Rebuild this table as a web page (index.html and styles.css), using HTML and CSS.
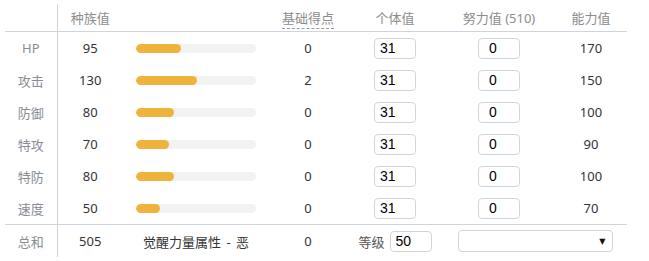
FILE: index.html
```html
<!DOCTYPE html>
<html lang="zh">
<head>
<meta charset="utf-8">
<link rel="stylesheet" href="styles.css">
</head>
<body>
<table class="stats">
  <colgroup>
    <col class="c-label"><col class="c-base"><col class="c-bar"><col class="c-ev"><col class="c-iv"><col class="c-effort"><col class="c-final">
  </colgroup>
  <thead>
    <tr>
      <th class="lbl"></th>
      <th class="th-base">种族值</th>
      <th></th>
      <th><span class="dashed">基础得点</span></th>
      <th>个体值</th>
      <th>努力值 (510)</th>
      <th>能力值</th>
    </tr>
  </thead>
  <tbody>
    <tr><td class="lbl">HP</td><td>95</td><td><div class="track"><div class="fill" style="width:44.7px"></div></div></td><td>0</td><td><input class="num" value="31"></td><td><input class="num ev" value="0"></td><td>170</td></tr>
    <tr><td class="lbl">攻击</td><td>130</td><td><div class="track"><div class="fill" style="width:61.2px"></div></div></td><td>2</td><td><input class="num" value="31"></td><td><input class="num ev" value="0"></td><td>150</td></tr>
    <tr><td class="lbl">防御</td><td>80</td><td><div class="track"><div class="fill" style="width:37.6px"></div></div></td><td>0</td><td><input class="num" value="31"></td><td><input class="num ev" value="0"></td><td>100</td></tr>
    <tr><td class="lbl">特攻</td><td>70</td><td><div class="track"><div class="fill" style="width:32.9px"></div></div></td><td>0</td><td><input class="num" value="31"></td><td><input class="num ev" value="0"></td><td>90</td></tr>
    <tr><td class="lbl">特防</td><td>80</td><td><div class="track"><div class="fill" style="width:37.6px"></div></div></td><td>0</td><td><input class="num" value="31"></td><td><input class="num ev" value="0"></td><td>100</td></tr>
    <tr><td class="lbl">速度</td><td>50</td><td><div class="track"><div class="fill" style="width:23.5px"></div></div></td><td>0</td><td><input class="num" value="31"></td><td><input class="num ev" value="0"></td><td>70</td></tr>
  </tbody>
  <tfoot>
    <tr>
      <td class="lbl">总和</td>
      <td>505</td>
      <td class="hp-type">觉醒力量属性 - 恶</td>
      <td>0</td>
      <td><span class="lv">等级</span><input class="num lvl" value="50"></td>
      <td colspan="2"><div class="select"><span class="arrow">▼</span></div></td>
    </tr>
  </tfoot>
</table>
</body>
</html>
```
FILE: styles.css
```css
html, body { margin: 0; padding: 0; background: #fff; }
body { padding: 4px 0 0 5px; font-family: "Noto Sans", "Noto Sans CJK SC", sans-serif; font-size: 13px; color: #333; }
.stats { border-collapse: collapse; table-layout: fixed; width: 622px; }
.c-label { width: 52px; }
.c-base { width: 66px; }
.c-bar { width: 146px; }
.c-ev { width: 78px; }
.c-iv { width: 96px; }
.c-effort { width: 112px; }
.c-final { width: 72px; }
.stats th { height: 27px; padding: 0; font-weight: normal; color: #8c8c8c; text-align: center; border-bottom: 1px solid #ced3dc; vertical-align: middle; }
.stats td { height: 32px; padding: 0; text-align: center; vertical-align: middle; }
.stats .lbl { border-right: 1px solid #ced3dc; color: #878c95; }
.stats tfoot td { border-top: 1px solid #ced3dc; height: 32px; }
.dashed { border-bottom: 1px dashed #999; padding-bottom: 1px; }
.track { width: 120px; height: 9px; margin: 0 auto; background: #f2f2f2; border-radius: 5px; overflow: hidden; }
.fill { height: 9px; background: #efb33c; border-radius: 5px; }
.num { box-sizing: border-box; width: 42px; height: 21px; border: 1px solid #d0d4db; border-radius: 4px; padding: 0 5px; font-family: "Liberation Sans", Arial, sans-serif; font-size: 14px; color: #000; vertical-align: middle; }
.num.ev { padding-left: 10px; }
.lv { vertical-align: middle; margin-right: 5px; color: #555; }
.hp-type { color: #333; word-spacing: 2px; }
.select { box-sizing: border-box; width: 155px; height: 22px; margin: 0 auto; border: 1px solid #d0d4db; border-radius: 4px; display: flex; align-items: center; justify-content: flex-end; padding-right: 6px; }
.arrow { font-family: "DejaVu Sans", sans-serif; font-size: 8px; color: #111; }
```
